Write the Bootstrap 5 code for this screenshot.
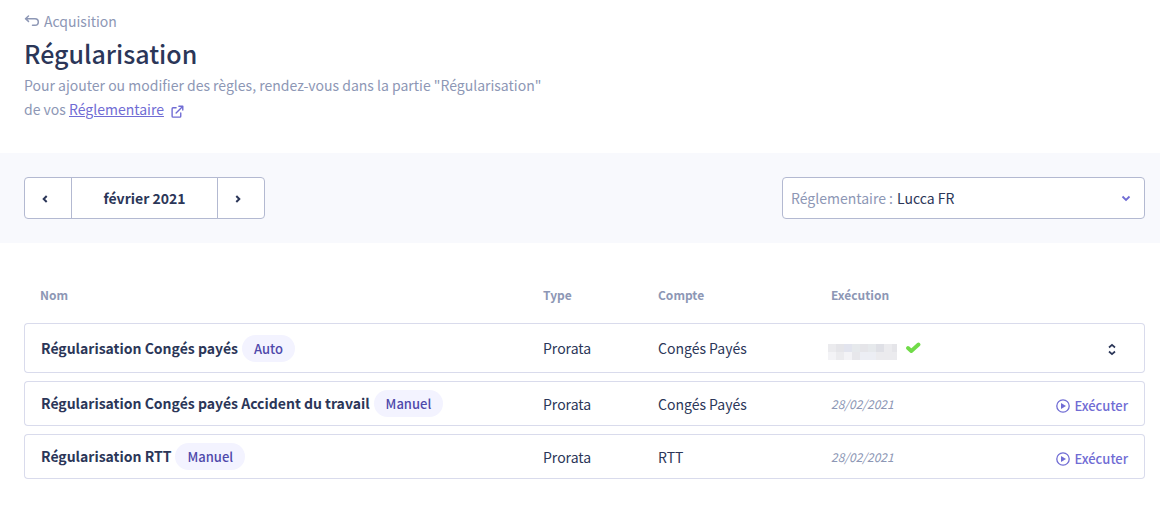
<!DOCTYPE html>
<html lang="fr">
<head>
<meta charset="utf-8">
<meta name="viewport" content="width=device-width, initial-scale=1">
<title>Régularisation</title>
<link rel="stylesheet" href="https://cdn.jsdelivr.net/npm/bootstrap@5.3.0/dist/css/bootstrap.min.css">
<style>
  :root {
    --ink: #2b3658;
    --muted: #8d97b5;
    --accent: #706cd4;
    --line: #d9dbec;
    --control-line: #b3b9d1;
  }
  body { font-family: "Noto Sans CJK SC", "Source Sans Pro", sans-serif; font-size: 14px; line-height: 24px; color: var(--ink); }
  .page-x { padding-left: 24px; padding-right: 15px; }
  .page-head { padding-top: 9px; padding-bottom: 32px; color: var(--muted); }
  .page-title { font-size: 25px; line-height: 39px; font-weight: 500; color: var(--ink); }
  .intro { max-width: 560px; }
  .back { color: var(--muted); }
  .intro a { color: var(--accent); }
  .filters { background: #f8f9fd; }
  .period .btn { --bs-btn-color: var(--ink); --bs-btn-bg: #fff; --bs-btn-border-color: var(--control-line); --bs-btn-border-radius: 4px;
    height: 42px; width: 48px; padding: 0 6px 0 0; font-size: 14px; font-weight: 700; flex: none; }
  .period .btn.month { width: 147px; padding: 0; }
  .legal { width: 363px; height: 42px; border: 1px solid var(--control-line); border-radius: 4px; }
  .legal label { color: var(--muted); }
  .legal select { appearance: none; color: var(--ink); height: 40px; padding: 0 32px 0 0; }
  .legal svg { position: absolute; right: 12px; pointer-events: none; }
  .rules { table-layout: fixed; border-collapse: separate; border-spacing: 0 8px; }
  .rules th { padding: 0 16px 8px; font-size: 12px; font-weight: 700; color: var(--muted); }
  .rules td { height: 45px; padding: 0 16px; border: solid var(--line); border-width: 1px 0; vertical-align: middle; }
  .rules .tall td { height: 50px; }
  .rules td:first-child { border-left-width: 1px; border-radius: 4px 0 0 4px; font-weight: 700; }
  .rules td:last-child { border-right-width: 1px; border-radius: 0 4px 4px 0; }
  .c-type { width: 115px; }
  .c-account { width: 173px; }
  .c-run { width: 150px; }
  .c-action { width: 180px; }
  .tag { display: inline-block; margin-left: 4px; padding: 0 12px; height: 27px; line-height: 27px; border-radius: 14px; background: #f3f3ff; color: #4f49ab; font-size: 13px; font-weight: 500; }
  .rules .date { font-size: 12px; font-style: italic; color: var(--muted); }
  .rules .masked { padding-left: 13px; }
  .mosaic { margin-top: 8px; }
  .run { font-size: 13px; font-weight: 500; color: var(--accent); line-height: 18px; }
  .expand { padding: 0 12px; }
</style>
</head>
<body>
<header class="page-head page-x">
  <a href="#" class="back d-inline-flex align-items-center text-decoration-none gap-1">
    <svg width="16" height="14" viewBox="0 0 16 14" fill="none" stroke="currentColor" stroke-width="1.5" stroke-linecap="round" stroke-linejoin="round" aria-hidden="true"><path d="M4.500 2 1.500 4.700l3 2.700M2 4.700h9a3.300 3.300 0 0 1 0 6.600H8.500"/></svg>Acquisition</a>
  <h1 class="page-title mb-0">Régularisation</h1>
  <p class="intro mb-0">Pour ajouter ou modifier des règles, rendez-vous dans la partie "Régularisation"<br>de vos <a href="#">Réglementaire</a>
    <a href="#" class="ms-1" aria-label="Ouvrir dans un nouvel onglet"><svg width="13" height="13" viewBox="0 0 14 14" fill="none" stroke="currentColor" stroke-width="1.500" stroke-linecap="round" stroke-linejoin="round" aria-hidden="true"><path d="M5.500 3H2.200a1 1 0 0 0-1 1v8a1 1 0 0 0 1 1h7.300a1 1 0 0 0 1-1V8.500M5.500 8.500 12.500 1.500M8.500 1.300h4.200v4.200"/></svg></a></p>
</header>

<section class="filters page-x py-4 d-flex flex-wrap justify-content-between gap-3">
  <div class="btn-group period" role="group" aria-label="Période">
    <button type="button" class="btn" aria-label="Mois précédent"><svg width="8" height="12" viewBox="0 0 8 12" fill="none" stroke="currentColor" stroke-width="2" aria-hidden="true"><path d="M5.700 2 2.700 5l3 3"/></svg></button>
    <button type="button" class="btn month">février 2021</button>
    <button type="button" class="btn" aria-label="Mois suivant"><svg width="8" height="12" viewBox="0 0 8 12" fill="none" stroke="currentColor" stroke-width="2" aria-hidden="true"><path d="M2.300 2l3 3-3 3"/></svg></button>
  </div>
  <div class="legal bg-white d-flex align-items-center position-relative px-2 gap-1">
    <label for="legal" class="text-nowrap">Réglementaire :</label>
    <select id="legal" class="flex-grow-1 border-0 bg-transparent"><option>Lucca FR</option></select>
    <svg width="12" height="10" viewBox="0 0 12 10" fill="none" stroke="#706cd4" stroke-width="1.800" aria-hidden="true"><path d="M2.500 3.500 6 7l3.500-3.500"/></svg>
  </div>
</section>

<main class="page-x pt-4">
  <table class="rules w-100 mt-2">
    <colgroup><col><col class="c-type"><col class="c-account"><col class="c-run"><col class="c-action"></colgroup>
    <thead>
      <tr><th scope="col">Nom</th><th scope="col">Type</th><th scope="col">Compte</th><th scope="col">Exécution</th><th></th></tr>
    </thead>
    <tbody>
      <tr class="tall">
        <td>Régularisation Congés payés<span class="tag">Auto</span></td>
        <td>Prorata</td><td>Congés Payés</td>
        <td class="masked"><div class="d-flex align-items-center gap-2">
          <svg class="mosaic flex-shrink-0" width="69" height="16" viewBox="0 0 69 16" shape-rendering="crispEdges" role="img" aria-label="Date masquée">
            <path fill="#ebebee" d="M0 0h69v16H0z"/><path fill="#e5e5e9" d="M8 0h8v8H8zM32 0h8v8h-8zM64 0h5v8h-5z"/><path fill="#e2e4ee" d="M16 0h8v8h-8z"/><path fill="#dfe0e6" d="M48 0h8v8h-8z"/><path fill="#e6e9ec" d="M24 0h8v8h-8zM40 0h8v8h-8z"/><path fill="#f3f3f6" d="M0 8h8v8H0zM16 8h8v8h-8z"/><path fill="#eceef4" d="M32 8h16v8H32z"/><path fill="#e7e7eb" d="M24 8h8v8h-8z"/></svg>
          <svg class="flex-shrink-0" width="16" height="12" viewBox="0 0 16 12" fill="none" stroke="#70db48" stroke-width="3.800" stroke-linecap="round" stroke-linejoin="round" aria-label="Exécuté" role="img"><path d="M3 6l3.300 3L13.500 2.500"/></svg>
        </div></td>
        <td class="text-end"><button type="button" class="btn border-0 py-0 expand d-inline-flex align-middle" aria-label="Déplier"><svg width="8" height="14" viewBox="0 0 8 14" fill="none" stroke="#2b3658" stroke-width="1.700" aria-hidden="true"><path d="M1 4.500l3-2.700 3 2.700M1 8.500l3 2.700 3-2.700"/></svg></button></td>
      </tr>
      <tr>
        <td>Régularisation Congés payés Accident du travail<span class="tag">Manuel</span></td>
        <td>Prorata</td><td>Congés Payés</td><td class="date">28/02/2021</td>
        <td class="text-end"><button type="button" class="btn run border-0 p-0 d-inline-flex align-items-center align-middle gap-1"><svg width="14" height="14" viewBox="0 0 14 14" aria-hidden="true"><circle cx="7" cy="7" r="6.200" fill="none" stroke="currentColor" stroke-width="1.300"/><path d="M5 4l5 3-5 3z" fill="currentColor"/></svg>Exécuter</button></td>
      </tr>
      <tr>
        <td>Régularisation RTT<span class="tag">Manuel</span></td>
        <td>Prorata</td><td>RTT</td><td class="date">28/02/2021</td>
        <td class="text-end"><button type="button" class="btn run border-0 p-0 d-inline-flex align-items-center align-middle gap-1"><svg width="14" height="14" viewBox="0 0 14 14" aria-hidden="true"><circle cx="7" cy="7" r="6.200" fill="none" stroke="currentColor" stroke-width="1.300"/><path d="M5 4l5 3-5 3z" fill="currentColor"/></svg>Exécuter</button></td>
      </tr>
    </tbody>
  </table>
</main>
<script src="https://cdn.jsdelivr.net/npm/bootstrap@5.3.0/dist/js/bootstrap.bundle.min.js"></script>
</body>
</html>
